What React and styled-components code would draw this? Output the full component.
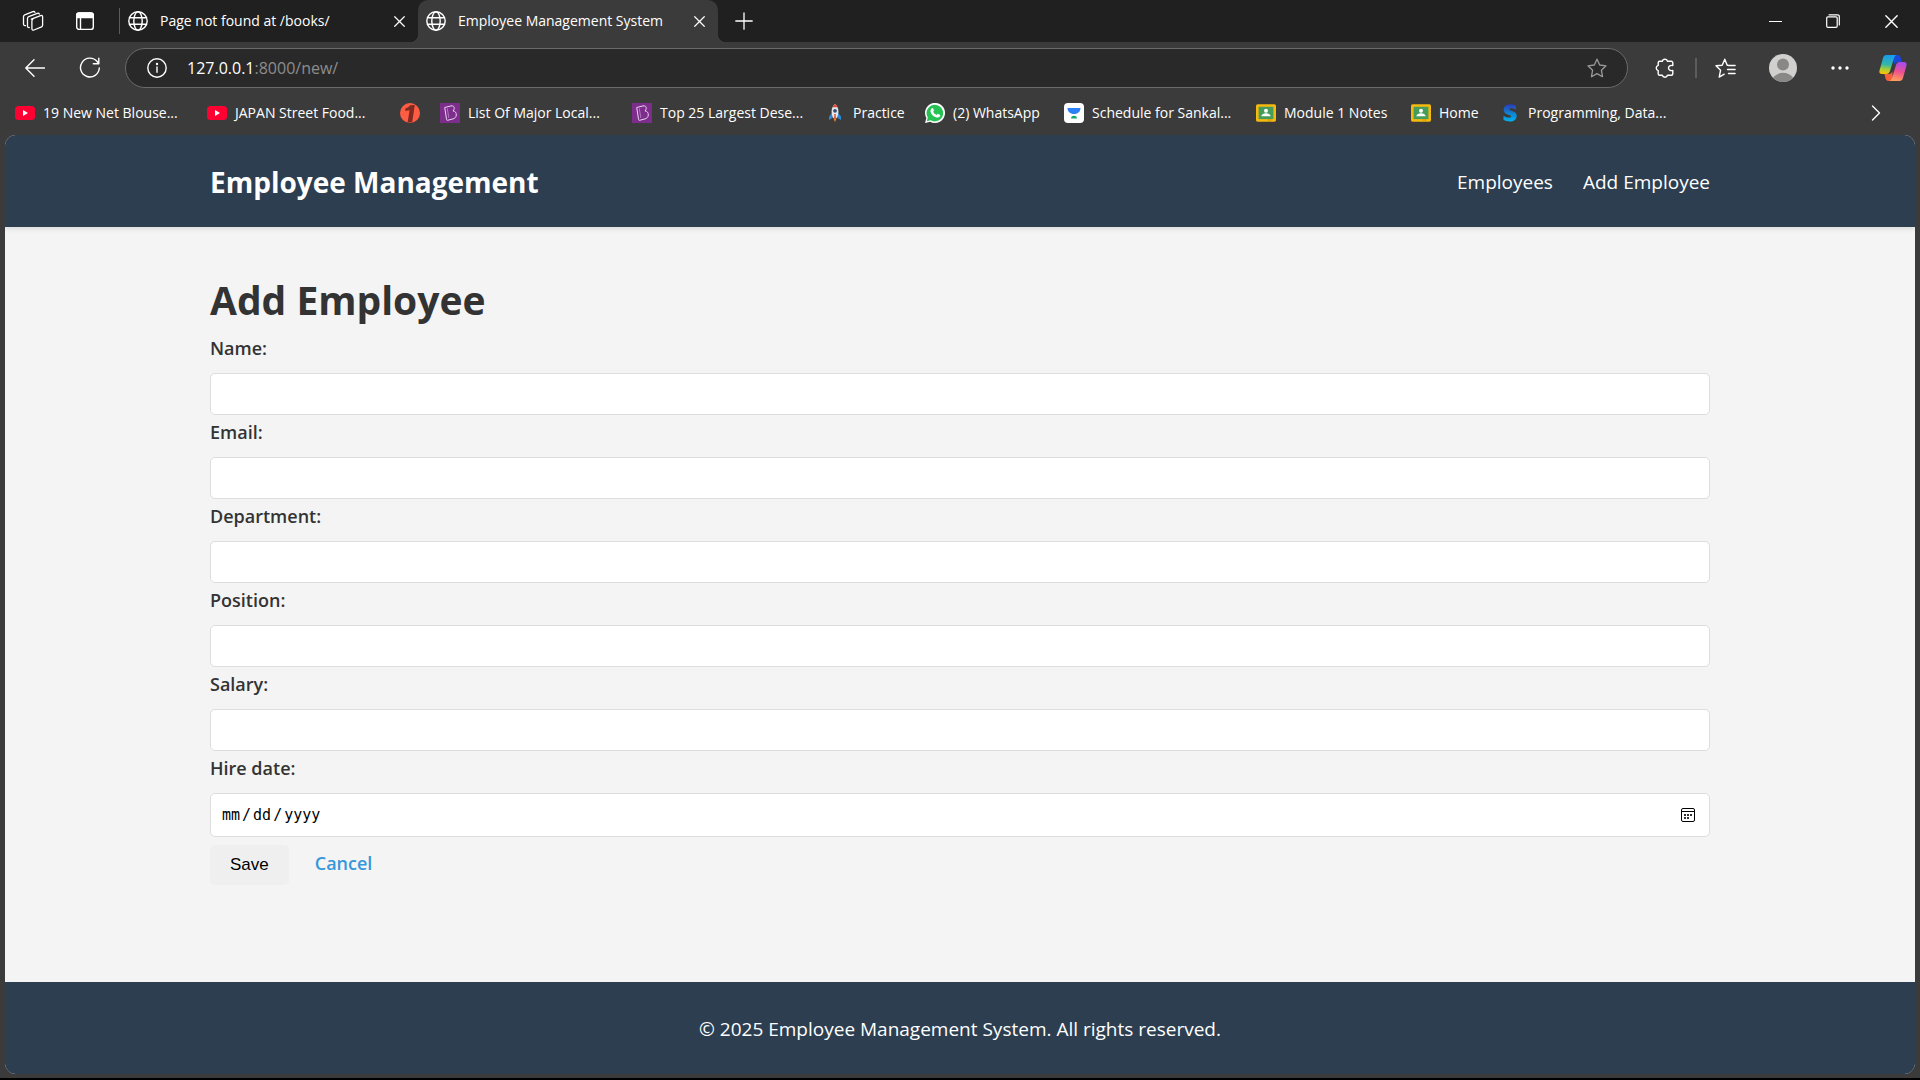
import React from "react";
import styled, { createGlobalStyle } from "styled-components";

const UI = `"Segoe UI", "Open Sans", "Noto Sans", sans-serif`;

const GlobalStyle = createGlobalStyle`
  *, *::before, *::after { box-sizing: border-box; }
  html, body { margin: 0; padding: 0; background: #000; }
  body { font-family: ${UI}; }
  button, input { font: inherit; margin: 0; }
  svg { display: block; flex: none; }
`;

/* ---------- browser window ---------- */

const Window = styled.div`
  display: flex;
  flex-direction: column;
  min-height: 100vh;
  background: #3b3b3b;
  border-bottom: 2px solid #000;
`;

const TitleBar = styled.div`
  display: flex;
  align-items: stretch;
  height: 42px;
  padding-left: 7px;
  background: #202020;
  color: #fff;
`;

const IconButton = styled.button`
  display: flex;
  align-items: center;
  justify-content: center;
  flex: none;
  width: ${(p) => p.$width || 40}px;
  padding: 0;
  border: 0;
  background: transparent;
  color: ${(p) => p.$color || "#fff"};
`;

const Divider = styled.span`
  flex: none;
  align-self: center;
  width: ${(p) => p.$width || 1}px;
  height: ${(p) => p.$height}px;
  margin-left: ${(p) => p.$before || 0}px;
  background: #5c5c5c;
`;

const Tab = styled.div`
  position: relative;
  display: flex;
  align-items: center;
  width: ${(p) => (p.$active ? 300 : 298)}px;
  padding: 0 8px;
  background: ${(p) => (p.$active ? "#3b3b3b" : "transparent")};
  border-radius: 10px 10px 0 0;
  &::before,
  &::after {
    content: "";
    display: ${(p) => (p.$active ? "block" : "none")};
    position: absolute;
    bottom: 0;
    width: 8px;
    height: 8px;
  }
  &::before {
    left: -8px;
    background: radial-gradient(circle at 0 0, transparent 8px, #3b3b3b 8px);
  }
  &::after {
    right: -8px;
    background: radial-gradient(circle at 100% 0, transparent 8px, #3b3b3b 8px);
  }
`;

const TabTitle = styled.span`
  flex: 1;
  margin-left: 12px;
  font-size: 14px;
  line-height: 20px;
  white-space: nowrap;
`;

const Spacer = styled.div`
  flex: 1;
`;

const Toolbar = styled.div`
  display: flex;
  align-items: stretch;
  height: 52px;
  padding: 6px 1px 6px 15px;
`;

const NavButtons = styled.div`
  display: flex;
  gap: 15px;
  margin-right: 15px;
`;

const AddressBar = styled.div`
  display: flex;
  align-items: center;
  flex: 1;
  margin-right: 7px;
  padding: 0 10px 0 11px;
  border: 1px solid #6a6a6a;
  border-radius: 20px;
  background: #292929;
`;

const Address = styled.span`
  flex: 1;
  margin-left: 10px;
  color: #8d8d8d;
  font-size: 16px;
  line-height: 24px;
  b {
    color: #fff;
    font-weight: 400;
  }
`;

const Bookmarks = styled.nav`
  display: flex;
  align-items: center;
  gap: 20px;
  height: 41px;
  padding: 0 24px 4px 15px;
`;

const Bookmark = styled.a`
  display: flex;
  align-items: center;
  flex: none;
  gap: 8px;
  width: ${(p) => p.$width}px;
  color: #fff;
  font-size: 14px;
  line-height: 20px;
  text-decoration: none;
  white-space: nowrap;
`;

/* ---------- page ---------- */

const Page = styled.div`
  display: flex;
  flex-direction: column;
  flex: 1;
  margin: 0 5px 4px;
  overflow: hidden;
  border-radius: 11px;
  background: #f4f4f4;
  color: #333;
  font-size: 19px;
  line-height: 32px;
`;

const Container = styled.div`
  width: 100%;
  max-width: 1500px;
  margin: 0 auto;
`;

const Header = styled.header`
  background: #2c3e50;
  padding: 23px 0 21px;
  box-shadow: 0 2px 5px rgba(0, 0, 0, 0.1);
`;

const HeaderRow = styled(Container)`
  display: flex;
  align-items: center;
  justify-content: space-between;
`;

const Brand = styled.a`
  color: #fff;
  font-size: 28px;
  font-weight: 700;
  line-height: 48px;
  text-decoration: none;
`;

const Links = styled.nav`
  display: flex;
  gap: 30px;
`;

const NavLink = styled.a`
  color: #fff;
  text-decoration: none;
`;

const Main = styled.main`
  flex: 1;
  padding: 41px 0 39px;
`;

const Title = styled.h1`
  margin: 0;
  font-size: 39px;
  font-weight: 700;
  line-height: 64px;
`;

const Label = styled.label`
  display: block;
  font-weight: 600;
  font-size: 18px;
`;

const FieldRow = styled.div`
  display: flex;
  flex-direction: column;
  gap: 9px;
  margin-bottom: 1px;
`;

const calendar = encodeURIComponent(
  `<svg xmlns="http://www.w3.org/2000/svg" width="14" height="14" viewBox="0 0 14 14"><rect x=".5" y=".5" width="13" height="13" rx="1.5" fill="none" stroke="#000"/><path d="M1 3.500h12" stroke="#000"/><path d="M3 6h2v2H3zM6 6h2v2H6zM9 6h2v2H9zM3 9h2v2H3zM6 9h2v2H6z" fill="#333"/></svg>`
);

const Field = styled.input`
  display: block;
  width: 100%;
  height: ${(p) => (p.type === "date" ? 44 : 42)}px;
  padding: 10px;
  border: 1px solid #ddd;
  border-radius: 5px;
  background: #fff;
  color: #000;
  font-family: ${(p) => (p.type === "date" ? `"DejaVu Sans Mono", monospace` : UI)};
  font-size: 15px;
  outline: none;
  &::-webkit-datetime-edit-text {
    padding: 0 1px;
  }
  &::-webkit-calendar-picker-indicator {
    width: 14px;
    height: 14px;
    margin-right: 4px;
    padding: 0;
    background: url("data:image/svg+xml,${calendar}") center / 14px 14px no-repeat;
  }
`;

const Actions = styled.div`
  display: flex;
  align-items: flex-start;
  gap: 26px;
  margin-top: 8px;
`;

const SaveButton = styled.button`
  height: 40px;
  padding: 0 20px;
  border: 0;
  border-radius: 5px;
  background: #efefef;
  color: #000;
  font-family: "Liberation Sans", Arial, sans-serif;
  font-size: 17px;
`;

const CancelLink = styled.a`
  color: #3498db;
  font-size: 18px;
  font-weight: 600;
  line-height: 36px;
  text-decoration: none;
`;

const Footer = styled.footer`
  padding: 31px 0 29px;
  background: #2c3e50;
  color: #fff;
  text-align: center;
`;

/* ---------- icons ---------- */

const Line = ({ size = 20, box = 20, w = 1.3, children }) => (
  <svg width={size} height={size} viewBox={`0 0 ${box} ${box}`} fill="none" stroke="currentColor" strokeWidth={w} strokeLinecap="round" strokeLinejoin="round" aria-hidden="true">
    {children}
  </svg>
);

const WorkspacesIcon = () => (
  <Line size={22} box={22} w={1.3}>
    <path d="M9.3 9.2 18.6 5.6c1.2-.4 2 .1 2 1.200v8.400c0 .8-.3 1.300-1 1.600l-7.600 3.200c-1.300.5-2.100 0-2.100-1.200v-7.600c0-1 .3-1.600 1-2z" />
    <path d="M7.200 17.500c-1.100.2-1.700-.3-1.700-1.400V8.500c0-1 .4-1.600 1.200-1.900l8.600-3.300c1-.3 1.700 0 2 .8" />
    <path d="M3.500 15.600c-1.400.2-2-.4-2-1.500V6.700c0-1 .4-1.600 1.200-1.900l8.200-3.200c1-.3 1.700 0 2 .7" />
  </Line>
);

const TabActionsIcon = () => (
  <Line size={20} box={20} w={1.4}>
    <rect x="1.700" y="2" width="16.600" height="16.400" rx="2.500" />
    <path d="M1.700 6.500V4.500A2.500 2.500 0 0 1 4.200 2h11.600a2.500 2.500 0 0 1 2.500 2.500v2z" fill="currentColor" />
    <path d="M5.500 6.500v11.500" />
  </Line>
);

const GlobeIcon = () => (
  <Line w={1.4}>
    <circle cx="10" cy="10" r="9.200" />
    <ellipse cx="10" cy="10" rx="4.200" ry="9.200" />
    <path d="M1.500 6.800h17M1.500 13.200h17" />
  </Line>
);

const CloseIcon = ({ size = 11 }) => (
  <Line size={size} box={12} w={1.3}>
    <path d="M.8.8l10.400 10.400M11.200.8.8 11.200" />
  </Line>
);

const PlusIcon = () => (
  <Line size={18} box={18} w={1.3}>
    <path d="M9 .8v16.400M.8 9h16.400" />
  </Line>
);

const MinimizeIcon = () => (
  <Line size={13} box={13} w={1.2}>
    <path d="M.5 6.500h12" />
  </Line>
);

const RestoreIcon = () => (
  <Line size={14} box={14} w={1.2}>
    <rect x=".7" y="2.800" width="10.500" height="10.500" rx="1.300" />
    <path d="M3 .8h8.600a1.700 1.700 0 0 1 1.700 1.700V11" />
  </Line>
);

const BackIcon = () => (
  <Line w={1.4}>
    <path d="M19.400 10H1M9 1.800.8 10 9 18.200" />
  </Line>
);

const ReloadIcon = () => (
  <Line size={22} box={22} w={1.4}>
    <path d="M20.300 11a9.400 9.400 0 1 1-2.200-6.500l1.500 1.800M19.800 1.300v5.500h-5.500" />
  </Line>
);

const InfoIcon = () => (
  <Line w={1.400}>
    <circle cx="10" cy="10" r="9.200" />
    <path d="M10 9v5.300" />
    <circle cx="10" cy="6" r=".5" fill="currentColor" />
  </Line>
);

const StarIcon = () => (
  <Line w={1.300}>
    <path d="M10 1.200 12.700 7l6.300.8-4.600 4.400 1.100 6.500L10 15.600l-5.500 3.100 1.100-6.500L1 7.800 7.300 7z" />
  </Line>
);

const ExtensionsIcon = () => (
  <Line w={1.400}>
    <path d="M4.700 3.200h2.600a2.700 2.700 0 0 1 5.200 0h3.800a1.500 1.500 0 0 1 1.500 1.500v2.900c-2.600-.7-4.300.6-4.300 2.400s1.700 3.100 4.300 2.400v3.400a1.500 1.500 0 0 1-1.500 1.500h-3.800a2.700 2.700 0 0 1-5.200 0H4.700a1.500 1.500 0 0 1-1.500-1.500v-3.200a2.700 2.700 0 0 1 0-5.200V4.700a1.500 1.500 0 0 1 1.500-1.500z" />
  </Line>
);

const FavoritesIcon = () => (
  <Line size={21} box={21} w={1.400}>
    <path d="M13 7.200h-.8L9.800 1.200 7.200 7.200 1 7.800l4.600 4.400-1.400 6.900 5-2.900M13.500 7.500h6.600M12.500 11.500h7.600M13.500 15.500h6.600" />
  </Line>
);

const AvatarIcon = () => (
  <svg width="28" height="28" viewBox="0 0 28 28" aria-hidden="true">
    <circle cx="14" cy="14" r="14" fill="#d2d0ce" />
    <circle cx="14" cy="10.500" r="6" fill="#8a8886" />
    <path d="M4 23.800C6.400 20.500 10 18.800 14 18.800s7.600 1.700 10 5A14 14 0 0 1 4 23.800z" fill="#8a8886" />
  </svg>
);

const DotsIcon = () => (
  <svg width="18" height="4" viewBox="0 0 18 4" fill="currentColor" aria-hidden="true">
    <circle cx="2" cy="2" r="1.700" />
    <circle cx="9" cy="2" r="1.700" />
    <circle cx="16" cy="2" r="1.700" />
  </svg>
);

const CopilotIcon = () => (
  <svg width="28" height="28" viewBox="0 0 28 28" aria-hidden="true">
    <defs>
      <linearGradient id="cpA" x1=".4" y1="0" x2=".3" y2="1">
        <stop offset="0" stopColor="#169cf0" />
        <stop offset=".5" stopColor="#35b7a5" />
        <stop offset=".75" stopColor="#a9ce37" />
        <stop offset="1" stopColor="#ffc400" />
      </linearGradient>
      <linearGradient id="cpB" x1=".6" y1="0" x2=".4" y2="1">
        <stop offset="0" stopColor="#a64bf0" />
        <stop offset=".5" stopColor="#ee5090" />
        <stop offset="1" stopColor="#ffa05a" />
      </linearGradient>
    </defs>
    <path d="M14 1h4.500c2 0 2.800 1.200 3.300 3l1 4h-4c-2 0-3 1-3.600 3z" fill="#1b48d8" />
    <path d="M14 27H9.500c-1.800 0-2.600-1.200-3.100-3l-1-4h4.400c2 0 3-1 3.500-3z" fill="#f4603a" />
    <path d="M7.500 1h10c-1.300.4-2 1.600-2.600 3.500L11 17c-.7 2-1.800 3-3.700 3H3c-2.200 0-3-1.500-2.500-3.500L4 4c.6-2 1.700-3 3.500-3z" fill="url(#cpA)" />
    <path d="M20.500 27h-10c1.300-.4 2-1.600 2.600-3.500L17 11c.7-2 1.800-3 3.700-3H25c2.200 0 3 1.500 2.500 3.500L24 24c-.6 2-1.700 3-3.500 3z" fill="url(#cpB)" />
  </svg>
);

const ChevronIcon = () => (
  <Line size={16} box={16} w={1.400}>
    <path d="M4.500 1l7 7-7 7" />
  </Line>
);

const Mark = ({ children }) => (
  <svg width="20" height="20" viewBox="0 0 20 20" aria-hidden="true">
    {children}
  </svg>
);

const marks = {
  video: (
    <Mark>
      <rect y="3" width="20" height="14" rx="3.500" fill="#ff0033" />
      <path d="M8 7l5 3-5 3z" fill="#fff" />
    </Mark>
  ),
  one: (
    <Mark>
      <circle cx="10" cy="10" r="10" fill="#ff5d43" />
      <path d="M5.500 5.200C8 4.600 9 3.500 10 2.200l4.800-.2-2.600 17.200-4.600.4L9.600 7.200l-4.400.7z" fill="#7e2a20" />
    </Mark>
  ),
  purple: (
    <Mark>
      <rect width="20" height="20" fill="#7d2e8d" />
      <path d="M4.700 4.500 11 2.900c2.200-.4 3.500.8 3.200 2.700-.1 1-.5 1.700-1.200 2.400 2.200.2 3.500 1.700 3.300 4-.2 2.200-1.300 3.400-3.300 3.900l-5.400 1.400c-.6.100-.9-.1-1-.7z" fill="none" stroke="#e9d3ee" strokeWidth="1" strokeLinejoin="round" />
      <path d="M7.300 5.500l1.500 9.300" fill="none" stroke="#c79bd0" strokeWidth=".7" />
    </Mark>
  ),
  rocket: (
    <Mark>
      <path d="M7 10l-3 3.500V17l3.500-2zM13 10l3 3.500V17l-3.500-2z" fill="#2a8ad8" />
      <path d="M10 1c2.400 2 3.400 4.500 3.400 7.500 0 2.500-.6 4.500-1.400 6.500H8c-.8-2-1.400-4-1.400-6.500C6.600 5.500 7.600 3 10 1z" fill="#e3e8ee" />
      <path d="M10 1c1.200 1 2 2 2.500 3.300h-5C8 3 8.800 2 10 1z" fill="#e34a32" />
      <circle cx="10" cy="7.800" r="1.900" fill="#35506a" />
      <path d="M8.300 14.500h3.400L10 19.200z" fill="#ff8a1f" />
      <path d="M9.300 11h1.400v5H9.300z" fill="#d9432f" />
    </Mark>
  ),
  chat: (
    <Mark>
      <path d="M0 20l1.400-5A10 10 0 1 1 5.200 18.700z" fill="#fff" />
      <path d="M1.800 18.200l1-3.700a8.300 8.300 0 1 1 2.900 2.800z" fill="#25c153" />
      <path d="M6.700 5.300c.5-.5 1.200-.4 1.500.2l.7 1.700c.1.400-.1.800-.8 1.600.8 1.500 2 2.500 3.500 3.200.7-.9 1-1.300 1.500-1.100l1.700.8c.6.300.5 1.500-.1 2.100-1.100 1.100-2.700 1-4.500.2-2-.9-3.600-2.500-4.400-4.500-.6-1.700-.3-3 .9-4.200z" fill="#fff" />
    </Mark>
  ),
  cup: (
    <Mark>
      <rect width="20" height="20" rx="4" fill="#fff" />
      <path d="M3.500 5h13c0 3.500-2.500 6-6.500 6S3.500 8.500 3.500 5z" fill="#2d81f7" />
      <path d="M7 15.500c0-1.700 1.200-2.800 3-2.800s3 1.100 3 2.800z" fill="#10a86b" />
    </Mark>
  ),
  classroom: (
    <Mark>
      <rect y="1.200" width="20" height="17.500" rx="1.600" fill="#f6b90e" />
      <rect x="2.600" y="3.800" width="14.800" height="12.300" fill="#459d5b" />
      <circle cx="10" cy="7.800" r="2" fill="#fff" />
      <path d="M5.300 13.300c.3-2 2.500-3 4.700-3s4.400 1 4.700 3z" fill="#fff" />
      <path d="M11.500 16.100h4v1.600h-4z" fill="#e0a000" />
    </Mark>
  ),
  wave: (
    <Mark>
      <defs>
        <linearGradient id="sg" x1="0" y1="0" x2="0" y2="1">
          <stop offset="0" stopColor="#2b3ab5" />
          <stop offset=".5" stopColor="#1180d0" />
          <stop offset="1" stopColor="#00b2ec" />
        </linearGradient>
      </defs>
      <path d="M16 2.500v4c-2-.9-4-1.400-5.500-1.200-1.500.2-1.500 1.400-.2 1.900l3 1.200c2.600 1 3.700 2.600 3.400 5-.4 3-3 5-6.700 5-2.600 0-4.800-.7-6.500-1.700v-4c2 1.300 4 2 6 1.900 1.800-.1 2.300-1.500.8-2.100l-3.200-1.300C4.700 10.200 3.500 8.700 3.700 6.200 4 3.200 6.500 1.300 10 1.300c2.300 0 4.300.4 6 1.200z" fill="url(#sg)" />
    </Mark>
  ),
};

/* ---------- data ---------- */

const bookmarks = [
  { icon: "video", text: "19 New Net Blouse...", width: 172 },
  { icon: "video", text: "JAPAN Street Food...", width: 173 },
  { icon: "one", text: "", width: 20 },
  { icon: "purple", text: "List Of Major Local...", width: 172 },
  { icon: "purple", text: "Top 25 Largest Dese...", width: 173 },
  { icon: "rocket", text: "Practice", width: 80 },
  { icon: "chat", text: "(2) WhatsApp", width: 119 },
  { icon: "cup", text: "Schedule for Sankal...", width: 172 },
  { icon: "classroom", text: "Module 1 Notes", width: 135 },
  { icon: "classroom", text: "Home", width: 69 },
  { icon: "wave", text: "Programming, Data...", width: 173 },
];

const fields = [
  { id: "name", label: "Name:", type: "text" },
  { id: "email", label: "Email:", type: "email" },
  { id: "department", label: "Department:", type: "text" },
  { id: "position", label: "Position:", type: "text" },
  { id: "salary", label: "Salary:", type: "number" },
  { id: "hire_date", label: "Hire date:", type: "date" },
];

const BrowserTab = ({ title, active }) => (
  <Tab $active={active}>
    <GlobeIcon />
    <TabTitle>{title}</TabTitle>
    <IconButton $width={22} aria-label="Close tab">
      <CloseIcon />
    </IconButton>
  </Tab>
);

export default function App() {
  return (
    <Window>
      <GlobalStyle />
      <TitleBar>
        <IconButton $width={52} aria-label="Workspaces"><WorkspacesIcon /></IconButton>
        <IconButton $width={52} aria-label="Tab actions"><TabActionsIcon /></IconButton>
        <Divider $height={26} $before={8} />
        <BrowserTab title="Page not found at /books/" />
        <BrowserTab title="Employee Management System" active />
        <IconButton $width={52} aria-label="New tab"><PlusIcon /></IconButton>
        <Spacer />
        <IconButton $width={58} aria-label="Minimize"><MinimizeIcon /></IconButton>
        <IconButton $width={58} aria-label="Restore"><RestoreIcon /></IconButton>
        <IconButton $width={58} aria-label="Close"><CloseIcon size={13} /></IconButton>
      </TitleBar>

      <Toolbar>
        <NavButtons>
          <IconButton aria-label="Back"><BackIcon /></IconButton>
          <IconButton aria-label="Reload"><ReloadIcon /></IconButton>
        </NavButtons>
        <AddressBar>
          <IconButton aria-label="Site information"><InfoIcon /></IconButton>
          <Address><b>127.0.0.1</b>:8000/new/</Address>
          <IconButton $color="#9a9a9a" aria-label="Add to favorites"><StarIcon /></IconButton>
        </AddressBar>
        <IconButton $width={60} aria-label="Extensions"><ExtensionsIcon /></IconButton>
        <Divider $height={20} $width={2} />
        <IconButton $width={56} aria-label="Favorites"><FavoritesIcon /></IconButton>
        <IconButton $width={60} aria-label="Profile"><AvatarIcon /></IconButton>
        <IconButton $width={54} aria-label="Settings and more"><DotsIcon /></IconButton>
        <IconButton $width={52} aria-label="Copilot"><CopilotIcon /></IconButton>
      </Toolbar>

      <Bookmarks aria-label="Favorites bar">
        {bookmarks.map((b, i) => (
          <Bookmark key={i} href="#" $width={b.width}>
            {marks[b.icon]}
            {b.text}
          </Bookmark>
        ))}
        <Spacer />
        <IconButton aria-label="More favorites"><ChevronIcon /></IconButton>
      </Bookmarks>

      <Page>
        <Header>
          <HeaderRow>
            <Brand href="#">Employee Management</Brand>
            <Links>
              <NavLink href="#">Employees</NavLink>
              <NavLink href="#">Add Employee</NavLink>
            </Links>
          </HeaderRow>
        </Header>
        <Main>
          <Container>
            <Title>Add Employee</Title>
            <form onSubmit={(e) => e.preventDefault()}>
              {fields.map((f) => (
                <FieldRow key={f.id}>
                  <Label htmlFor={f.id}>{f.label}</Label>
                  <Field id={f.id} name={f.id} type={f.type} />
                </FieldRow>
              ))}
              <Actions>
                <SaveButton type="submit">Save</SaveButton>
                <CancelLink href="#">Cancel</CancelLink>
              </Actions>
            </form>
          </Container>
        </Main>
        <Footer>© 2025 Employee Management System. All rights reserved.</Footer>
      </Page>
    </Window>
  );
}
